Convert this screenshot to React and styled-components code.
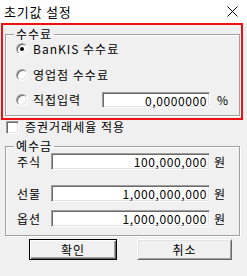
import React from 'react';
import styled, { createGlobalStyle } from 'styled-components';

const GlobalStyle = createGlobalStyle`
  html, body {
    margin: 0;
    padding: 0;
    background: #f0f0f0;
  }
  body {
    font-family: "Noto Sans CJK KR", "DejaVu Sans", sans-serif;
    font-size: 12px;
    color: #000;
  }
`;

const Window = styled.div`
  width: 247px;
  height: 276px;
  background: #f0f0f0;
  overflow: hidden;
`;

const TitleBar = styled.div`
  height: 23px;
  background: #fff;
  display: flex;
  align-items: center;
  justify-content: space-between;
  padding: 0 9px 0 4px;
  font-size: 13px;
`;

const Title = styled.span`
  line-height: 1;
  letter-spacing: 0.8px;
`;

const Body = styled.div`
  padding: 0 4px 0 1px;
  display: flex;
  flex-direction: column;
`;

const Highlight = styled.div`
  border: 2px solid #f01010;
  padding: 2px 1px 2px 2px;
  width: 242px;
  box-sizing: border-box;
`;

const Group = styled.fieldset`
  margin: ${(p) => p.$margin || '0'};
  padding: ${(p) => p.$pad || '0'};
  border: 1px solid #a0a0a0;
  box-shadow: inset 1px 1px 0 #fff, 1px 1px 0 #fff;
  display: flex;
  flex-direction: column;
  min-width: 0;
  width: ${(p) => p.$width || 'auto'};
  box-sizing: border-box;
`;

const Legend = styled.legend`
  margin-left: 8px;
  padding: 0 2px;
  line-height: 14px;
  letter-spacing: 1px;
`;

const Row = styled.div`
  display: flex;
  align-items: center;
  height: ${(p) => p.$h || 24}px;
  margin-top: ${(p) => p.$mt || 0}px;
`;

const RadioCircle = styled.span`
  width: 12px;
  height: 12px;
  box-sizing: border-box;
  border-radius: 50%;
  border: 1px solid;
  border-color: #a0a0a0 #ffffff #ffffff #a0a0a0;
  box-shadow: inset 1px 1px 0 #696969, inset -1px -1px 0 #e3e3e3;
  background: #fff;
  display: flex;
  align-items: center;
  justify-content: center;
  margin: 0 5px 0 10px;
  flex: none;
  &::after {
    content: '';
    width: 4px;
    height: 4px;
    border-radius: 50%;
    background: ${(p) => (p.$on ? '#000' : 'transparent')};
  }
`;

const CheckBox = styled.span`
  width: 13px;
  height: 13px;
  box-sizing: border-box;
  border: 1px solid;
  border-color: #a0a0a0 #ffffff #ffffff #a0a0a0;
  box-shadow: inset 1px 1px 0 #696969, inset -1px -1px 0 #e3e3e3;
  background: #fff;
  margin: 0 6px 0 5px;
  flex: none;
`;

const Label = styled.span`
  width: ${(p) => (p.$w ? `${p.$w}px` : 'auto')};
  padding-left: ${(p) => p.$indent || 0}px;
  box-sizing: border-box;
  flex: none;
  line-height: 1;
  letter-spacing: 1px;
`;

const Field = styled.div`
  width: ${(p) => p.$w}px;
  height: ${(p) => p.$h || 16}px;
  box-sizing: border-box;
  border: 1px solid;
  border-color: #a0a0a0 #ffffff #ffffff #a0a0a0;
  box-shadow: inset 1px 1px 0 #696969, inset -1px -1px 0 #e3e3e3;
  background: #fff;
  display: flex;
  align-items: center;
  justify-content: flex-end;
  padding-right: 2px;
  font-size: 12px;
  letter-spacing: 0.6px;
  flex: none;
`;

const Unit = styled.span`
  margin-left: ${(p) => p.$gap || 4}px;
  line-height: 1;
`;

const ButtonRow = styled.div`
  display: flex;
  padding-left: 28px;
  gap: 20px;
  margin-top: 3px;
`;

const Button = styled.div`
  width: ${(p) => p.$w}px;
  height: 21px;
  box-sizing: border-box;
  background: #f0f0f0;
  border: 1px solid;
  border-color: ${(p) =>
    p.$default ? '#000 #000 #000 #000' : '#fff #696969 #696969 #fff'};
  box-shadow: ${(p) =>
    p.$default
      ? 'inset 1px 1px 0 #fff, inset -1px -1px 0 #696969, inset -2px -2px 0 #a0a0a0'
      : 'inset 1px 1px 0 #e3e3e3, inset -1px -1px 0 #a0a0a0'};
  display: flex;
  align-items: center;
  justify-content: center;
  font-size: 12px;
  letter-spacing: 1px;
`;

const CloseIcon = () => (
  <svg width="11" height="11" viewBox="0 0 11 11">
    <path d="M0.5 0.5 L10.5 10.5 M10.5 0.5 L0.5 10.5" stroke="#000" strokeWidth="1" />
  </svg>
);

const deposits = [
  { name: '주식', value: '100,000,000', gap: 0 },
  { name: '선물', value: '1,000,000,000', gap: 15 },
  { name: '옵션', value: '1,000,000,000', gap: 8 },
];

export default function App() {
  return (
    <Window>
      <GlobalStyle />
      <TitleBar>
        <Title>초기값 설정</Title>
        <CloseIcon />
      </TitleBar>
      <Body>
        <Highlight>
          <Group $pad="0 0 3px 0">
            <Legend>수수료</Legend>
            <Row $h={26} $mt={-5}>
              <RadioCircle $on />
              <Label>BanKIS 수수료</Label>
            </Row>
            <Row $h={26}>
              <RadioCircle />
              <Label>영업점 수수료</Label>
            </Row>
            <Row $h={24}>
              <RadioCircle />
              <Label $w={69}>직접입력</Label>
              <Field $w={108}>0,0000000</Field>
              <Unit $gap={7}>%</Unit>
            </Row>
          </Group>
        </Highlight>
        <Row $h={14}>
          <CheckBox />
          <Label>증권거래세율 적용</Label>
        </Row>
        <Group $pad="0 0 8px 0" $width="235px" $margin="5px 0 0 4px">
          <Legend>예수금</Legend>
          {deposits.map((d) => (
            <Row key={d.name} $h={17} $mt={d.gap}>
              <Label $w={45} $indent={11}>{d.name}</Label>
              <Field $w={159} $h={17}>{d.value}</Field>
              <Unit>원</Unit>
            </Row>
          ))}
        </Group>
        <ButtonRow>
          <Button $w={88} $default>확인</Button>
          <Button $w={95}>취소</Button>
        </ButtonRow>
      </Body>
    </Window>
  );
}
